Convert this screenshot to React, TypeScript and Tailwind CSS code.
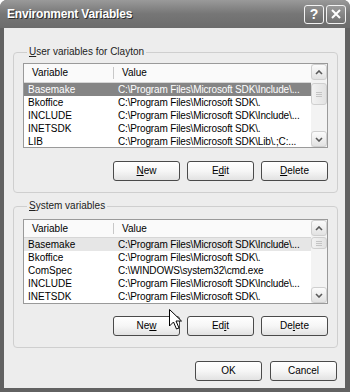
import React from "react";

type Row = [string, string];

const userRows: Row[] = [
  ["Basemake", "C:\\Program Files\\Microsoft SDK\\Include\\..."],
  ["Bkoffice", "C:\\Program Files\\Microsoft SDK\\."],
  ["INCLUDE", "C:\\Program Files\\Microsoft SDK\\Include\\..."],
  ["INETSDK", "C:\\Program Files\\Microsoft SDK\\."],
  ["LIB", "C:\\Program Files\\Microsoft SDK\\Lib\\.;C:..."],
];

const sysRows: Row[] = [
  ["Basemake", "C:\\Program Files\\Microsoft SDK\\Include\\..."],
  ["Bkoffice", "C:\\Program Files\\Microsoft SDK\\."],
  ["ComSpec", "C:\\WINDOWS\\system32\\cmd.exe"],
  ["INCLUDE", "C:\\Program Files\\Microsoft SDK\\Include\\..."],
  ["INETSDK", "C:\\Program Files\\Microsoft SDK\\."],
];

function Mn({ text, idx }: { text: string; idx: number }) {
  return (
    <>
      {text.slice(0, idx)}
      <span className="underline underline-offset-[1px]">{text[idx]}</span>
      {text.slice(idx + 1)}
    </>
  );
}

function Btn({ text, idx }: { text: string; idx: number }) {
  return (
    <button className="flex h-[20px] w-[67px] items-center justify-center rounded-[3px] border border-[#4a4a4a] bg-gradient-to-b from-[#ffffff] via-[#f6f6f6] to-[#e2e2e2] text-[10px] leading-none text-black">
      {idx >= 0 ? <Mn text={text} idx={idx} /> : text}
    </button>
  );
}

function ScrollBtn({ up }: { up: boolean }) {
  return (
    <div className="flex h-[16px] w-[16px] items-center justify-center rounded-[3px] border border-[#cfcfcf] bg-gradient-to-b from-[#fbfbfb] to-[#e2e2e2]">
      <svg width="8" height="5" viewBox="0 0 8 5">
        <path
          d={up ? "M1 4 L4 1 L7 4" : "M1 1 L4 4 L7 1"}
          fill="none"
          stroke="#5a5a5a"
          strokeWidth="1.6"
        />
      </svg>
    </div>
  );
}

function ListBox({
  rows,
  headerClass,
  focused,
  thumbClass,
}: {
  rows: Row[];
  headerClass: string;
  focused: boolean;
  thumbClass: string;
}) {
  return (
    <div className="flex h-[85px] overflow-hidden border border-[#9a9a9a] bg-white">
      <div className="flex min-w-0 flex-1 flex-col">
        <div className={headerClass}>
          <div className="flex w-[89px] items-center pl-[8px]">Variable</div>
          <div className="my-[3px] w-px bg-[#c8c8c8]" />
          <div className="flex flex-1 items-center pl-[8px]">Value</div>
        </div>
        {rows.map((r, i) => {
          const sel = i === 0;
          const cls = sel
            ? focused
              ? "flex h-[13px] shrink-0 bg-[#858585] text-white"
              : "flex h-[13px] shrink-0 bg-[#e6e6e6] text-black"
            : "flex h-[13px] shrink-0 text-black";
          return (
            <div key={i} className={cls}>
              <div className="w-[90px] truncate pl-[4px] text-[10px] leading-[13px]">{r[0]}</div>
              <div className="flex-1 whitespace-nowrap pl-[4px] text-[10px] leading-[13px] tracking-[-0.15px]">{r[1]}</div>
            </div>
          );
        })}
      </div>
      <div className="flex w-[16px] flex-col bg-[#f3f3f3]">
        <ScrollBtn up />
        <div className="flex flex-1 flex-col">
          <div className={thumbClass}>
            <div className="flex flex-col gap-[1px]">
              <div className="h-px w-[6px] bg-[#c4c4c4]" />
              <div className="h-px w-[6px] bg-[#c4c4c4]" />
              <div className="h-px w-[6px] bg-[#c4c4c4]" />
            </div>
          </div>
        </div>
        <ScrollBtn up={false} />
      </div>
    </div>
  );
}

export default function App() {
  return (
    <div className="relative h-[392px] w-[350px] bg-white font-['Liberation_Sans',Arial,sans-serif]">
      <div className="flex h-full w-full flex-col overflow-hidden rounded-t-[7px] bg-[#626262]">
        {/* Title bar */}
        <div className="flex h-[28px] shrink-0 items-center bg-gradient-to-b from-[#9a9a9a] via-[#767676] to-[#6c6c6c] pl-[7px] pr-[4px]">
          <span className="flex-1 text-[12px] font-bold tracking-[-0.2px] text-white [text-shadow:1px_1px_0_#2e2e2e]">
            Environment Variables
          </span>
          <div className="flex gap-[2px]">
            <div className="flex h-[19px] w-[20px] items-center justify-center rounded-[3px] border border-[#f2f2f2] bg-gradient-to-b from-[#8f8f8f] to-[#6a6a6a] text-[14px] font-bold leading-none text-white">
              ?
            </div>
            <div className="flex h-[19px] w-[20px] items-center justify-center rounded-[3px] border border-[#f2f2f2] bg-gradient-to-b from-[#9a9a9a] to-[#727272]">
              <svg width="10" height="10" viewBox="0 0 10 10">
                <path d="M1 1 L9 9 M9 1 L1 9" stroke="white" strokeWidth="2" />
              </svg>
            </div>
          </div>
        </div>

        {/* Body */}
        <div className="mb-[4px] ml-[4px] mr-[5px] flex flex-1 flex-col bg-[#ededed] pl-[9px] pr-[7px] pt-[17px] text-black">
          <fieldset className="rounded-[4px] border border-[#cfcfcf] px-[9px] pb-[11px] pt-[4px]">
            <legend className="ml-[4px] px-[2px] text-[10px] leading-[14px] text-[#222]">
              <Mn text="User variables for Clayton" idx={0} />
            </legend>
            <ListBox
              rows={userRows}
              focused
              headerClass="flex h-[19px] shrink-0 border-b border-[#d6d6d6] bg-[#fafafa] text-[10px] leading-none"
              thumbClass="mt-[3px] flex h-[22px] items-center justify-center rounded-[3px] border border-[#cfcfcf] bg-gradient-to-r from-[#f2f2f2] to-[#e2e2e2]"
            />
            <div className="mt-[13px] flex justify-end gap-[7px]">
              <Btn text="New" idx={0} />
              <Btn text="Edit" idx={1} />
              <Btn text="Delete" idx={0} />
            </div>
          </fieldset>

          <fieldset className="mt-[6px] rounded-[4px] border border-[#cfcfcf] px-[9px] pb-[11px] pt-[6px]">
            <legend className="ml-[4px] px-[2px] text-[10px] leading-[14px] text-[#222]">
              <Mn text="System variables" idx={0} />
            </legend>
            <ListBox
              rows={sysRows}
              focused={false}
              headerClass="flex h-[18px] shrink-0 border-b border-[#d6d6d6] bg-[#fafafa] text-[10px] leading-none"
              thumbClass="mt-[1px] flex h-[12px] items-center justify-center rounded-[3px] border border-[#cfcfcf] bg-gradient-to-r from-[#f2f2f2] to-[#e2e2e2]"
            />
            <div className="mt-[12px] flex justify-end gap-[7px]">
              <Btn text="New" idx={2} />
              <Btn text="Edit" idx={2} />
              <Btn text="Delete" idx={2} />
            </div>
          </fieldset>

          <div className="mt-[13px] flex justify-end gap-[8px] pr-[1px]">
            <Btn text="OK" idx={-1} />
            <Btn text="Cancel" idx={-1} />
          </div>
        </div>
      </div>

      {/* mouse cursor */}
      <svg
        className="absolute left-[169px] top-[309px]"
        width="13"
        height="21"
        viewBox="0 0 13 21"
      >
        <path
          d="M0.5 0.5 L0.5 17 L4.5 13 L7.5 20 L10 19 L7 12 L12.5 12 Z"
          fill="white"
          stroke="black"
          strokeWidth="1"
          strokeLinejoin="round"
        />
      </svg>
    </div>
  );
}
